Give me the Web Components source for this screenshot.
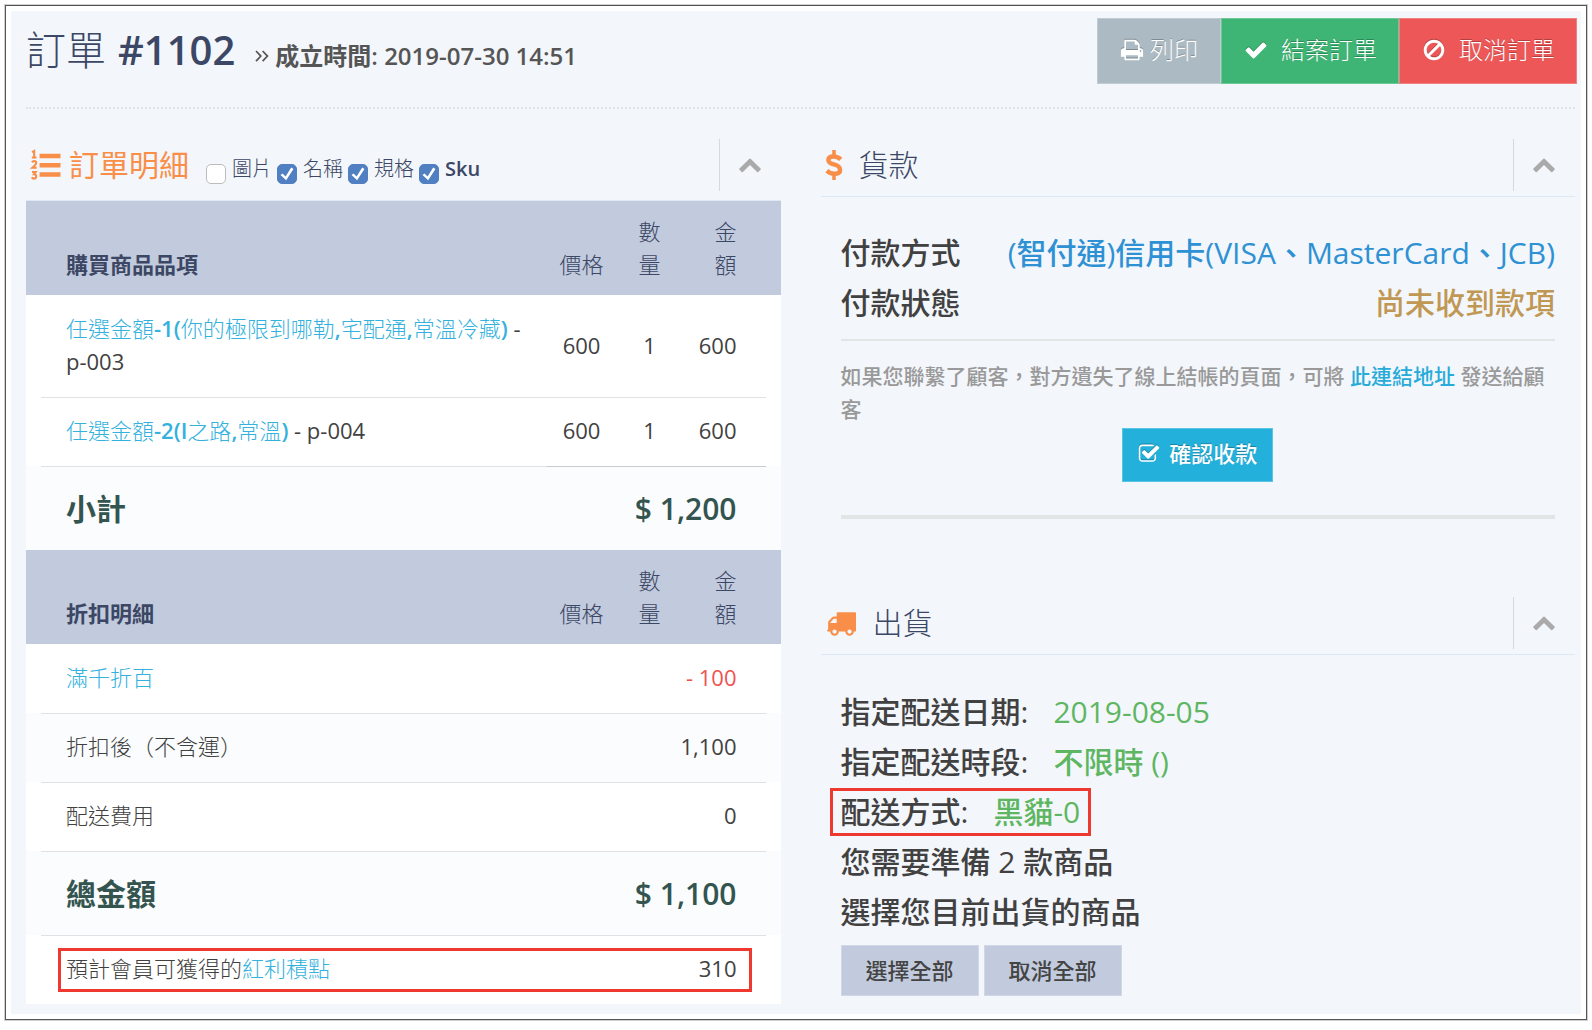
<!DOCTYPE html>
<html lang="zh-Hant">
<head>
<meta charset="utf-8">
<title>訂單 #1102</title>
<style>
html, body { margin: 0; min-height: 100%; background: #fff; }
body {
  --cjk: "Open Sans", "Noto Sans CJK TC", sans-serif;
  --accent: #f98e49;
  --ink: #3b4764;
  --link: #35b1dd;
  --bar: #c2cadd;
  --line: #e2e5e6;
  font-family: var(--cjk);
  font-size: 22px;
  line-height: 33px;
  color: #414141;
}
</style>
</head>
<body>
<order-page></order-page>

<script>
const ICONS = {
  check: '<path d="M1671 566q0 40-28 68l-724 724-136 136q-28 28-68 28t-68-28l-136-136-362-362q-28-28-28-68t28-68l136-136q28-28 68-28t68 28l294 295 656-657q28-28 68-28t68 28l136 136q28 28 28 68z"/>',
  up: '<path d="M1683 1331l-166 165q-19 19-45 19t-45-19l-531-531-531 531q-19 19-45 19t-45-19l-166-165q-19-19-19-45.5t19-45.5l742-741q19-19 45-19t45 19l742 741q19 19 19 45.5t-19 45.5z"/>',
  print: '<path d="M448 1536h896v-256h-896v256zm0-640h896v-384h-160q-40 0-68-28t-28-68v-160h-640v640zm1152 64q0-26-19-45t-45-19-45 19-19 45 19 45 45 19 45-19 19-45zm128 0v416q0 13-9.500 22.500t-22.500 9.500h-224v160q0 40-28 68t-68 28h-960q-40 0-68-28t-28-68v-160h-224q-13 0-22.500-9.500t-9.500-22.500v-416q0-79 56.500-135.500t135.500-56.500h64v-544q0-40 28-68t68-28h672q40 0 88 20t76 48l152 152q28 28 48 76t20 88v256h64q79 0 135.500 56.500t56.500 135.500z"/>',
  ban: '<path d="M1440 893q0-161-87-295l-754 753q137 89 297 89 111 0 211.500-43.500t173.500-116.500 116-174.500 43-212.500zm-999 299l755-754q-135-91-300-91-148 0-273 73t-198 199-73 274q0 162 89 299zm1223-299q0 157-61 300t-163.500 246-245 164-298.500 61-298.500-61-245-164-163.500-246-61-300 61-299.500 163.500-245.500 245-164 298.500-61 298.500 61 245 164 163.500 245.500 61 299.500z"/>',
  truck: '<path d="M640 1408q0-52-38-90t-90-38-90 38-38 90 38 90 90 38 90-38 38-90zm-384-512h384v-256h-158q-13 0-22 9l-195 195q-9 9-9 22v30zm1280 512q0-52-38-90t-90-38-90 38-38 90 38 90 90 38 90-38 38-90zm256-1088v1024q0 15-4 26.500t-13.500 18.500-16.500 11.500-23.500 6-22.500 2-25.500 0-22.500-.5q0 106-75 181t-181 75-181-75-75-181h-384q0 106-75 181t-181 75-181-75-75-181h-64q-3 0-22.500.5t-25.500 0-22.500-2-23.500-6-16.500-11.500-13.500-18.500-4-26.500q0-26 19-45t45-19v-320q0-8-.5-35t0-38 2.500-34.500 6.500-37 14-30.500 22.500-30l198-198q19-19 50.500-32t58.500-13h160v-192q0-26 19-45t45-19h1024q26 0 45 19t19 45z"/>',
  tick: '<path d="M1472 930v318q0 119-84.500 203.500t-203.500 84.500h-832q-119 0-203.500-84.500t-84.500-203.500v-832q0-119 84.500-203.500t203.500-84.500h832q63 0 117 25 15 7 18 23 3 17-9 29l-49 49q-10 10-23 10-3 0-9-2-23-6-45-6h-832q-66 0-113 47t-47 113v832q0 66 47 113t113 47h832q66 0 113-47t47-113v-254q0-13 9-22l64-64q10-10 23-10 6 0 12 3 20 8 20 29zm231-489l-814 814q-24 24-57 24t-57-24l-430-430q-24-24-24-57t24-57l110-110q24-24 57-24t57 24l263 263 647-647q24-24 57-24t57 24l110 110q24 24 24 57t-24 57z"/>',
  dollar: '<g fill="none" stroke="currentColor" stroke-width="270"><path d="M1310 560Q1130 380 880 380Q570 380 570 590Q570 770 900 860Q1270 950 1270 1190Q1270 1420 910 1420Q670 1420 480 1230"/><path d="M905 0v360M905 1420v372" stroke-width="210"/></g>',
  list: '<path d="M512 230h1250v270H512zM512 776h1250v270H512zM512 1322h1250v270H512z"/><g fill="none" stroke="currentColor" stroke-width="125"><path d="M60 130L190 60V460M50 450H330"/><path d="M60 740Q110 660 190 660Q310 660 310 770Q310 850 80 1060H340"/><path d="M60 1310H280L180 1450Q310 1450 310 1570Q310 1710 180 1710Q90 1710 40 1640"/></g>',
  raquo: '<g fill="none" stroke="currentColor" stroke-width="170"><path d="M200 400L680 900L200 1400M860 400L1340 900L860 1400"/></g>'
};
const VIEWBOX = { dollar: '425 0 960 1792' };

function define(name, markup, setup) {
  const tpl = document.createElement('template');
  tpl.innerHTML = markup;
  customElements.define(name, class extends HTMLElement {
    constructor() {
      super();
      this.attachShadow({ mode: 'open' }).append(tpl.content.cloneNode(true));
    }
    connectedCallback() { if (setup) setup(this, this.shadowRoot); }
  });
}

define('ui-icon', `
<style>
:host { display: inline-block; width: 24px; height: 24px; flex: none; }
svg { display: block; width: 100%; height: 100%; fill: currentColor; overflow: visible; }
</style><svg viewBox="0 0 1792 1792" aria-hidden="true"></svg>`,
(el, root) => {
  const svg = root.querySelector('svg'), name = el.getAttribute('name');
  if (VIEWBOX[name]) svg.setAttribute('viewBox', VIEWBOX[name]);
  svg.innerHTML = ICONS[name] || '';
});

define('ui-button', `
<style>
:host { display: block; }
button {
  display: flex; align-items: center; gap: var(--btn-gap, 12px);
  font: inherit; color: var(--btn-ink, #fff); background: var(--btn-bg);
  border: 1px solid rgba(255,255,255,.25); border-radius: 0; margin: 0;
  padding: var(--btn-pad); text-shadow: var(--btn-shadow, 0 -1px 0 rgba(0,0,0,.25)); cursor: pointer;
}
::slotted(ui-icon) { filter: drop-shadow(0 -1px 0 rgba(0,0,0,.25)); }
</style><button type="button"><slot name="icon"></slot><span><slot></slot></span></button>`);

define('check-field', `
<style>
:host { display: block; }
label { display: flex; align-items: center; gap: 6px; font-size: 20px; line-height: 30px; font-weight: 300; }
:host([latin]) label { font-weight: 600; }
input {
  appearance: none; display: grid; place-content: center; box-sizing: border-box;
  width: 20px; height: 20px; margin: 10px 0 0;
  background: #fff; border: 1px solid #bcbcbc; border-radius: 5px;
}
input:checked { background: #5180c2; border-color: #5180c2; }
input:checked::after {
  content: ""; width: 14px; height: 14px; background: #fff;
  clip-path: polygon(4% 58%, 18% 46%, 40% 68%, 80% 4%, 96% 14%, 44% 94%);
}
</style><label><input type="checkbox"><span><slot></slot></span></label>`,
(el, root) => { root.querySelector('input').checked = el.hasAttribute('checked'); });

define('page-header', `
<style>
:host { display: flex; justify-content: space-between; align-items: flex-start;
  margin-left: 15px; margin-right: 6px; padding-top: 7px; height: 89px; border-bottom: 2px dotted #dfe3e6; }
h1 { display: flex; align-items: baseline; margin: 2px 0 0; font-size: 40px; line-height: 60px; font-weight: 200; color: var(--ink); }
h1 b { font-weight: 600; margin-left: 12px; }
small { display: flex; align-items: baseline; gap: 3px; margin-left: 19px; font-size: 24px; font-weight: 600; color: #555; }
small ui-icon { width: 18px; height: 18px; align-self: center; }
.actions { display: flex; font-size: 24px; line-height: 36px; font-weight: 200; margin-right: -2px; }
.print { --btn-bg: #abbac3; --btn-pad: 13px 22px 15px; --btn-gap: 6px; }
.close, .cancel { --btn-pad: 13px 21px 15px 22px; --btn-gap: 13px; }
.close { --btn-bg: #3eb574; }
.cancel { --btn-bg: #ed5757; }
</style>
<h1>訂單 <b>#1102</b> <small><ui-icon name="raquo"></ui-icon><span>成立時間: 2019-07-30 14:51</span></small></h1>
<div class="actions">
  <ui-button class="print"><ui-icon slot="icon" name="print"></ui-icon>列印</ui-button>
  <ui-button class="close"><ui-icon slot="icon" name="check"></ui-icon>結案訂單</ui-button>
  <ui-button class="cancel"><ui-icon slot="icon" name="ban"></ui-icon>取消訂單</ui-button>
</div>`);

define('panel-section', `
<style>
:host { display: block; }
header { display: flex; justify-content: space-between; align-items: flex-start; height: 61px; padding-bottom: var(--head-pad, 0); border-bottom: 1px solid #dce8f3; }
.title { display: flex; align-items: center; padding: 7px 0 0 5px; color: var(--ink); }
h2 { display: flex; align-items: center; gap: var(--title-gap, 16px); margin: 0; font-size: 30px; line-height: 45px; font-weight: 200; }
:host([accent]) h2 { color: var(--accent); font-weight: 400; }
h2 ::slotted(ui-icon) { width: 30px; height: 30px; color: var(--accent); }
.tools { display: flex; gap: 5px; padding: 9px 0 0 17px; }
button { display: grid; place-items: center; width: 62px; height: 52px; box-sizing: border-box; padding: 0 1px 2px 0; margin: 4px 0 0; border: 0; border-left: 1px solid #d5d9dd; background: none; color: #aaa; }
</style>
<header>
  <div class="title"><h2><slot name="icon"></slot><slot name="title"></slot></h2><div class="tools"><slot name="tools"></slot></div></div>
  <button type="button" aria-label="收合"><ui-icon name="up"></ui-icon></button>
</header>
<slot></slot>`);

define('order-table', `
<style>
:host { display: block; }
table { width: 100%; border-collapse: collapse; table-layout: fixed; background: #fff; }
.c2 { width: 70px; } .c3 { width: 66px; } .c4 { width: 98px; }
th, td { padding: 17px 0 19px; text-align: left; font-weight: 400; vertical-align: middle; }
th:first-child, td:first-child { padding-left: 40px; padding-right: 24px; }
thead th { padding: 14px 0; vertical-align: bottom; background: var(--bar); color: var(--ink); font-weight: 300; }
thead th:first-child { font-weight: 600; }
thead th:nth-child(n+2) { padding-left: 13px; padding-right: 13px; text-align: center; }
thead th:nth-child(3) { padding-left: 20px; padding-right: 20px; }
thead th:last-child { padding-left: 30px; padding-right: 44px; text-align: right; }
td:nth-child(n+2) { text-align: center; }
td:last-child { padding-right: 44px; text-align: right; }
tbody td:first-child { font-weight: 300; }
.row + .row { background: linear-gradient(#dfe2e4, #dfe2e4) top / calc(100% - 30px) 1px no-repeat; }
.row.alt { background-color: #fafcfd; }
.row.sum td { padding-top: 20px; padding-bottom: 19px; font-size: 30px; line-height: 45px; font-weight: 600; color: #34554f; }
.row.heavy { background: linear-gradient(#c9cbcc, #c9cbcc) right 15px top / 219px 1px no-repeat, linear-gradient(#dfe2e4, #dfe2e4) top / calc(100% - 30px) 1px no-repeat, #fafcfd; }
a { color: var(--link); text-decoration: none; }
a b { font-weight: 600; }
span { white-space: nowrap; font-weight: 400; }
.minus { color: #ee524f; }
.row.marked { position: relative; }
.marked td:last-child::after { content: ""; position: absolute; inset: 13px 29px 12px 32px; border: 3px solid #ef3830; }
</style>
<table>
  <colgroup><col><col class="c2"><col class="c3"><col class="c4"></colgroup>
  <thead><tr><th>購買商品品項</th><th>價格</th><th>數量</th><th>金額</th></tr></thead>
  <tbody>
    <tr class="row"><td><a href="#">任選金額<b>-1(</b>你的極限到哪勒<b>,</b>宅配通<b>,</b>常溫冷藏<b>)</b></a> <span>-</span> <span>p-003</span></td><td>600</td><td>1</td><td>600</td></tr>
    <tr class="row"><td><a href="#">任選金額<b>-2(I</b>之路<b>,</b>常溫<b>)</b></a> <span>- p-004</span></td><td>600</td><td>1</td><td>600</td></tr>
    <tr class="row sum heavy"><td>小計</td><td colspan="3">$ 1,200</td></tr>
  </tbody>
  <thead><tr><th>折扣明細</th><th>價格</th><th>數量</th><th>金額</th></tr></thead>
  <tbody>
    <tr class="row"><td><a href="#">滿千折百</a></td><td colspan="3" class="minus">- 100</td></tr>
    <tr class="row alt"><td>折扣後（不含運）</td><td colspan="3">1,100</td></tr>
    <tr class="row"><td>配送費用</td><td colspan="3">0</td></tr>
    <tr class="row sum alt"><td>總金額</td><td colspan="3">$ 1,100</td></tr>
    <tr class="row marked"><td>預計會員可獲得的<a href="#">紅利積點</a></td><td colspan="3">310</td></tr>
  </tbody>
</table>`);

define('payment-info', `
<style>
:host { display: block; padding: 31px 20px 0; font-weight: 500; }
dl { margin: 0; padding-bottom: 11px; border-bottom: 2px solid var(--line); font-size: 30px; line-height: 50px; }
dl div { display: flex; justify-content: space-between; }
dd { margin: 0; }
.method { color: #2e91d3; } .status { color: #c09853; }
p { margin: 19px 0 0; font-size: 21px; color: #999; }
a { color: #27abd9; text-decoration: none; }
.confirm { display: flex; justify-content: center; margin-top: 2px; --btn-bg: #23b1dc; --btn-pad: 8px 15px 11px 14px; --btn-gap: 8px; }
.confirm ui-icon { height: 22px; }
hr { height: 4px; margin: 33px 0 0; border: 0; background: #e1e5e5; }
</style>
<dl><div><dt>付款方式</dt><dd class="method">(智付通)信用卡(VISA、MasterCard、JCB)</dd></div>
<div><dt>付款狀態</dt><dd class="status">尚未收到款項</dd></div></dl>
<p>如果您聯繫了顧客，對方遺失了線上結帳的頁面，可將 <a href="#">此連結地址</a> 發送給顧客</p>
<div class="confirm"><ui-button><ui-icon slot="icon" name="tick"></ui-icon>確認收款</ui-button></div>
<hr>`);

define('shipping-info', `
<style>
:host { display: block; padding: 32px 20px 0; font-size: 30px; line-height: 50px; font-weight: 500; }
p { margin: 0; }
em { font-style: normal; color: #5fb662; margin-left: 25px; }
.mark { position: relative; display: inline-block; }
.mark::after { content: ""; position: absolute; inset: 1px -11px; border: 3px solid #ef3830; }
.actions { display: flex; gap: 5px; margin-top: 8px; font-size: 22px; line-height: 33px; --btn-bg: var(--bar); --btn-ink: #444; --btn-pad: 8px 24px; --btn-shadow: none; }
</style>
<p>指定配送日期:<em>2019-08-05</em></p>
<p>指定配送時段:<em>不限時 ()</em></p>
<p><span class="mark">配送方式:<em>黑貓-0</em></span></p>
<p>您需要準備 2 款商品</p>
<p>選擇您目前出貨的商品</p>
<div class="actions"><ui-button>選擇全部</ui-button><ui-button>取消全部</ui-button></div>`);

define('order-page', `
<style>
:host { display: block; padding: 5px; }
.frame { border: 1px solid #555; box-shadow: 0 0 0 1px #d0d0d0; padding: 5px; background: #fff; }
main { background: #f3f6fb; padding-bottom: 10px; }
.cols { display: grid; grid-template-columns: 1fr 1fr; gap: 40px; padding: 26px 6px 0 15px; }
.details { --head-pad: 4px; --title-gap: 8px; }
.ship { margin-top: 74px; --title-gap: 17px; }
.pay { --title-gap: 17px; }
.pay ui-icon { width: 16px; }
</style>
<div class="frame"><main>
  <page-header></page-header>
  <div class="cols">
    <panel-section class="details" accent>
      <ui-icon slot="icon" name="list"></ui-icon><span slot="title">訂單明細</span>
      <check-field slot="tools">圖片</check-field>
      <check-field slot="tools" checked>名稱</check-field>
      <check-field slot="tools" checked>規格</check-field>
      <check-field slot="tools" checked latin>Sku</check-field>
      <order-table></order-table>
    </panel-section>
    <div>
      <panel-section class="pay"><ui-icon slot="icon" name="dollar"></ui-icon><span slot="title">貨款</span><payment-info></payment-info></panel-section>
      <panel-section class="ship"><ui-icon slot="icon" name="truck"></ui-icon><span slot="title">出貨</span><shipping-info></shipping-info></panel-section>
    </div>
  </div>
</main></div>`);
</script>
</body>
</html>
